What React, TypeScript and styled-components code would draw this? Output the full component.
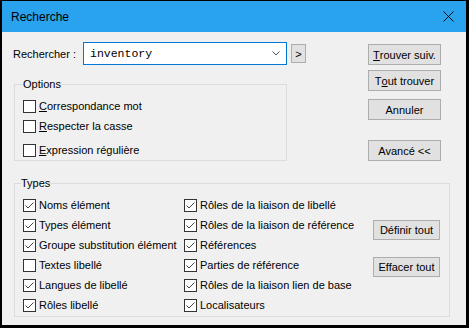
import React from 'react';
import styled, { createGlobalStyle } from 'styled-components';

const GlobalStyle = createGlobalStyle`
  html, body {
    margin: 0;
    padding: 0;
    background: #000;
  }
  body {
    font-family: 'Liberation Sans', Arial, sans-serif;
    font-size: 11px;
    color: #000;
  }
`;

const Window = styled.div`
  box-sizing: border-box;
  width: 469px;
  height: 328px;
  border-style: solid;
  border-color: #000;
  border-width: 1px 3px 3px 2px;
  background: #f0f0f0;
  display: flex;
  flex-direction: column;
`;

const TitleBar = styled.div`
  height: 31px;
  flex-shrink: 0;
  background: #2aa3ef;
  display: flex;
  align-items: center;
  justify-content: space-between;
  padding: 0 12px 0 9px;
`;

const Title = styled.span`
  font-size: 12px;
  color: #000;
`;

const Body = styled.div`
  padding: 10px 0 0 11px;
  display: flex;
  flex-direction: column;
`;

const Top = styled.div`
  display: flex;
  align-items: flex-start;
`;

const LeftCol = styled.div`
  width: 293px;
  display: flex;
  flex-direction: column;
`;

const SearchRow = styled.div`
  display: flex;
  align-items: center;
  height: 23px;
`;

const SearchLabel = styled.label`
  width: 70px;
  flex-shrink: 0;
`;

const Combo = styled.div`
  box-sizing: border-box;
  width: 204px;
  height: 23px;
  border: 1px solid #0078d7;
  background: #fff;
  display: flex;
  align-items: center;
  justify-content: space-between;
  padding: 0 6px 0 6px;
`;

const ComboText = styled.span`
  font-family: 'Liberation Mono', 'Courier New', monospace;
  font-size: 11.5px;
`;

const Button = styled.button<{ $w: number; $h?: number; $mt?: number }>`
  box-sizing: border-box;
  width: ${p => p.$w}px;
  height: ${p => p.$h ?? 21}px;
  margin-top: ${p => p.$mt ?? 0}px;
  padding: 0;
  border: 1px solid #adadad;
  background: #e1e1e1;
  font-family: 'Liberation Sans', Arial, sans-serif;
  font-size: 11px;
  color: #000;
  display: flex;
  align-items: center;
  justify-content: center;

  u {
    text-decoration: underline;
  }
`;

const ArrowButton = styled(Button)`
  margin-left: 4px;
`;

const Group = styled.fieldset<{ $w: number; $mt: number; $pt: number; $pb: number }>`
  box-sizing: border-box;
  width: ${p => p.$w}px;
  margin: ${p => p.$mt}px 0 0 1px;
  padding: ${p => p.$pt}px 0 ${p => p.$pb}px 8px;
  border: 1px solid #dcdcdc;
  min-width: 0;
`;

const Legend = styled.legend<{ $ml?: number }>`
  padding: 0;
  margin-left: ${p => p.$ml ?? 0}px;
  line-height: 14px;
`;

const CheckRow = styled.div<{ $mt?: number }>`
  display: flex;
  align-items: center;
  height: 20px;
  margin-top: ${p => p.$mt ?? 0}px;
  white-space: nowrap;
`;

const Box = styled.span`
  box-sizing: border-box;
  width: 13px;
  height: 13px;
  flex-shrink: 0;
  border: 1px solid #333;
  background: #fff;
  margin-right: 3px;
  display: flex;
`;

const ButtonCol = styled.div`
  margin-left: 62px;
  display: flex;
  flex-direction: column;
`;

const TypesGrid = styled.div`
  display: grid;
  grid-template-columns: 161px 189px 67px;
`;

const TypesButtons = styled.div`
  display: flex;
  flex-direction: column;
  padding-top: 25px;
  gap: 17px;
`;

const Check = ({ checked, children, mt }: { checked?: boolean; children: React.ReactNode; mt?: number }) => (
  <CheckRow $mt={mt}>
    <Box>
      {checked && (
        <svg width="11" height="11" viewBox="0 0 11 11">
          <polyline points="1.5,5.5 4,8 9.5,2.5" fill="none" stroke="#444" strokeWidth="1" />
        </svg>
      )}
    </Box>
    <span>{children}</span>
  </CheckRow>
);

const left = [
  { t: 'Noms élément', c: true },
  { t: 'Types élément', c: true },
  { t: 'Groupe substitution élément', c: true },
  { t: 'Textes libellé', c: false },
  { t: 'Langues de libellé', c: true },
  { t: 'Rôles libellé', c: true },
];

const right = [
  'Rôles de la liaison de libellé',
  'Rôles de la liaison de référence',
  'Références',
  'Parties de référence',
  'Rôles de la liaison lien de base',
  'Localisateurs',
];

export default function App() {
  return (
    <>
      <GlobalStyle />
      <Window>
        <TitleBar>
          <Title>Recherche</Title>
          <svg width="11" height="11" viewBox="0 0 11 11">
            <path d="M0.5 0.5 L10.5 10.5 M10.5 0.5 L0.5 10.5" stroke="#000" strokeWidth="1" />
          </svg>
        </TitleBar>
        <Body>
          <Top>
            <LeftCol>
              <SearchRow>
                <SearchLabel>Rechercher :</SearchLabel>
                <Combo>
                  <ComboText>inventory</ComboText>
                  <svg width="8" height="5" viewBox="0 0 8 5">
                    <polyline points="0.5,0.5 4,4 7.5,0.5" fill="none" stroke="#555" strokeWidth="1" />
                  </svg>
                </Combo>
                <ArrowButton $w={15} $h={19}>&gt;</ArrowButton>
              </SearchRow>
              <Group $w={273} $mt={12} $pt={5} $pb={0}>
                <Legend>Options</Legend>
                <Check><u>C</u>orrespondance mot</Check>
                <Check><u>R</u>especter la casse</Check>
                <Check mt={4}><u>E</u>xpression régulière</Check>
              </Group>
            </LeftCol>
            <ButtonCol>
              <Button $w={73} $mt={2}><u>T</u>rouver suiv.</Button>
              <Button $w={73} $mt={5}>T<u>o</u>ut trouver</Button>
              <Button $w={73} $mt={8}>Annuler</Button>
              <Button $w={73} $mt={20}>Avancé &lt;&lt;</Button>
            </ButtonCol>
          </Top>
          <Group $w={436} $mt={15} $pt={5} $pb={1}>
            <Legend $ml={-2}>Types</Legend>
            <TypesGrid>
              <div>
                {left.map(i => (
                  <Check key={i.t} checked={i.c}>{i.t}</Check>
                ))}
              </div>
              <div>
                {right.map(t => (
                  <Check key={t} checked>{t}</Check>
                ))}
              </div>
              <TypesButtons>
                <Button $w={67} $h={20}>Définir tout</Button>
                <Button $w={67} $h={20}>Effacer tout</Button>
              </TypesButtons>
            </TypesGrid>
          </Group>
        </Body>
      </Window>
    </>
  );
}
